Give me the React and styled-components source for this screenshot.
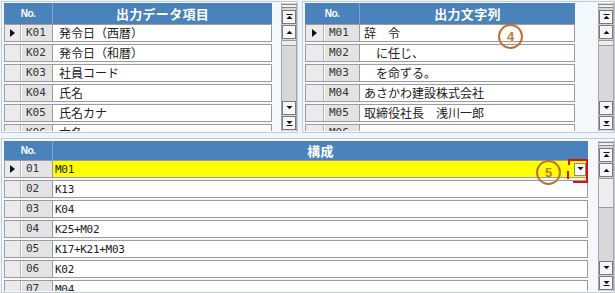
import React from "react";
import styled, { createGlobalStyle } from "styled-components";

const GlobalStyle = createGlobalStyle`
  body {
    margin: 0;
    background: #eef5fc;
    font-family: "Noto Sans CJK JP", "Liberation Sans", sans-serif;
  }
`;

const Page = styled.div`
  position: relative;
  width: 615px;
  height: 293px;
  box-sizing: border-box;
  padding: 1px 0 0 1px;
  display: grid;
  grid-template-columns: 297px 313px;
  grid-template-rows: 132px 155px;
  column-gap: 4px;
  row-gap: 5px;
`;

const Panel = styled.div`
  grid-column: ${(p) => (p.wide ? "1 / span 2" : "auto")};
  display: flex;
  box-sizing: border-box;
  border: 1px solid #c3ccd6;
  padding: ${(p) => (p.wide ? "2px" : "1px")} 0 1px 2px;
  background: #f3f8fd;
  overflow: hidden;
`;

const Grid = styled.div`
  width: ${(p) => p.w}px;
  display: flex;
  flex-direction: column;
  overflow: hidden;
  flex-shrink: 0;
`;

const HeadRow = styled.div`
  display: flex;
  flex-shrink: 0;
  height: ${(p) => p.h}px;
  background: #4a82bb;
  color: #fff;
`;

const HeadNo = styled.div`
  width: ${(p) => p.w}px;
  border-right: 1px solid #7aa5d0;
  display: flex;
  align-items: center;
  justify-content: center;
  font: bold 10px "Liberation Sans", sans-serif;
  letter-spacing: -0.6px;
`;

const HeadTitle = styled.div`
  flex: 1;
  display: flex;
  align-items: center;
  justify-content: center;
  font-size: 13px;
  font-weight: bold;
  letter-spacing: 0.3px;
`;

const Row = styled.div`
  display: flex;
  flex-shrink: 0;
  height: 18px;
  box-sizing: border-box;
  border: 1px solid #9c9c9c;
  border-right: none;
  margin-bottom: 2px;
`;

const Selector = styled.div`
  width: ${(p) => p.w || 15}px;
  background: #ebebeb;
  border-right: 1px solid #b4b4b4;
  display: flex;
  align-items: center;
  justify-content: center;
`;

const Pointer = styled.div`
  width: 0;
  height: 0;
  border-top: 4px solid transparent;
  border-bottom: 4px solid transparent;
  border-left: 5px solid #111;
`;

const NoCell = styled.div`
  width: ${(p) => p.w}px;
  background: #e3e3e3;
  border-left: 1px solid #fff;
  border-right: 1px solid #9c9c9c;
  padding-left: 4px;
  box-sizing: border-box;
  color: #333;
  font: 11px/16px "DejaVu Sans Mono", monospace;
`;

const Value = styled.div`
  flex: 1;
  display: flex;
  align-items: center;
  background: ${(p) => (p.active ? "#ffff00" : "#fff")};
  border-right: 1px solid #9c9c9c;
  padding-left: ${(p) => p.pad}px;
  color: #222;
  font-size: 12px;
  line-height: 16px;
  white-space: pre;
`;

const Code = styled.span`
  font: 11px "DejaVu Sans Mono", monospace;
  letter-spacing: -0.3px;
`;

const DropBtn = styled.div`
  margin-left: auto;
  margin-right: 1px;
  width: 12px;
  height: 13px;
  box-sizing: border-box;
  background: #fafafa;
  border: 1px solid #8c8c8c;
  display: flex;
  align-items: center;
  justify-content: center;
`;

const Scroll = styled.div`
  margin-left: auto;
  width: 16px;
  display: flex;
  flex-direction: column;
  box-sizing: border-box;
  background: #d7d7d7;
  border-left: 1px solid #a6a6a6;
  border-right: 1px solid #a6a6a6;
`;

const Cap = styled.div`
  height: 2px;
  margin-top: 1px;
  border-top: 1px solid #888;
  border-bottom: 1px solid #888;
  background: #f0f0f0;
`;

const SBtn = styled.div`
  height: 14px;
  margin-top: ${(p) => p.mt || 1}px;
  box-sizing: border-box;
  background: #f6f6f6;
  border: 1px solid #7a7a7a;
  display: flex;
  align-items: center;
  justify-content: center;
`;

const Thumb = styled.div`
  height: ${(p) => p.h}px;
  margin-top: 1px;
  background: #ededed;
  border-top: 1px solid #9a9a9a;
  border-bottom: 1px solid #9a9a9a;
`;

const Track = styled.div`
  flex: 1;
`;

const Badge = styled.div`
  position: absolute;
  left: ${(p) => p.x}px;
  top: ${(p) => p.y}px;
  width: 25px;
  height: 25px;
  box-sizing: border-box;
  border: 2.5px solid #c0702c;
  border-radius: 50%;
  display: flex;
  align-items: center;
  justify-content: center;
  color: #c8762e;
  font: bold 13px "Liberation Sans", sans-serif;
`;

const Mark = styled.svg`
  position: absolute;
  left: 564px;
  top: 157px;
`;

const Arrow = ({ kind }) => {
  const up = kind === "first" || kind === "up";
  const bar = kind === "first" || kind === "last";
  return (
    <svg width="7" height="6" viewBox="0 0 7 6">
      {up ? (
        <>
          <polygon points="0.5,5 6.5,5 3.5,1.8" fill="#111" />
          {bar && <rect x="0.5" y="0" width="6" height="1" fill="#111" />}
        </>
      ) : (
        <>
          <polygon points="0.5,1 6.5,1 3.5,4.2" fill="#111" />
          {bar && <rect x="0.5" y="5" width="6" height="1" fill="#111" />}
        </>
      )}
    </svg>
  );
};

const ScrollBar = ({ thumb }) => (
  <Scroll>
    <Cap />
    <SBtn mt={2}>
      <Arrow kind="first" />
    </SBtn>
    <SBtn>
      <Arrow kind="up" />
    </SBtn>
    <Thumb h={thumb} />
    <Track />
    <SBtn>
      <Arrow kind="down" />
    </SBtn>
    <SBtn>
      <Arrow kind="last" />
    </SBtn>
    <div style={{ height: 1 }} />
  </Scroll>
);

const dataItems = [
  ["K01", "発令日（西暦）"],
  ["K02", "発令日（和暦）"],
  ["K03", "社員コード"],
  ["K04", "氏名"],
  ["K05", "氏名カナ"],
  ["K06", "本名"],
];

const strings = [
  ["M01", "辞　令"],
  ["M02", "　に任じ、"],
  ["M03", "　を命ずる。"],
  ["M04", "あさかわ建設株式会社"],
  ["M05", "取締役社長　浅川一郎"],
  ["M06", ""],
];

const layout = [
  ["01", "M01"],
  ["02", "K13"],
  ["03", "K04"],
  ["04", "K25+M02"],
  ["05", "K17+K21+M03"],
  ["06", "K02"],
  ["07", "M04"],
];

const App = () => (
  <Page>
    <GlobalStyle />
    <Panel>
      <Grid w={268}>
        <HeadRow h={21}>
          <HeadNo w={48}>No.</HeadNo>
          <HeadTitle>出力データ項目</HeadTitle>
        </HeadRow>
        {dataItems.map(([no, text], i) => (
          <Row key={no}>
            <Selector>{i === 0 && <Pointer />}</Selector>
            <NoCell w={32}>{no}</NoCell>
            <Value pad={6}>{text}</Value>
          </Row>
        ))}
      </Grid>
      <ScrollBar thumb={4} />
    </Panel>

    <Panel>
      <Grid w={270}>
        <HeadRow h={21}>
          <HeadNo w={54}>No.</HeadNo>
          <HeadTitle>出力文字列</HeadTitle>
        </HeadRow>
        {strings.map(([no, text], i) => (
          <Row key={no}>
            <Selector w={17}>{i === 0 && <Pointer />}</Selector>
            <NoCell w={36}>{no}</NoCell>
            <Value pad={4}>{text}</Value>
          </Row>
        ))}
      </Grid>
      <ScrollBar thumb={4} />
    </Panel>

    <Panel wide>
      <Grid w={584}>
        <HeadRow h={19}>
          <HeadNo w={48}>No.</HeadNo>
          <HeadTitle>構成</HeadTitle>
        </HeadRow>
        {layout.map(([no, text], i) => (
          <Row key={no}>
            <Selector>{i === 0 && <Pointer />}</Selector>
            <NoCell w={32}>{no}</NoCell>
            <Value pad={2} active={i === 0}>
              <Code>{text}</Code>
              {i === 0 && (
                <DropBtn>
                  <Arrow kind="down" />
                </DropBtn>
              )}
            </Value>
          </Row>
        ))}
      </Grid>
      <ScrollBar thumb={28} />
    </Panel>

    <Badge x={498} y={24}>4</Badge>
    <Badge x={536} y={160}>5</Badge>
    <Mark width="28" height="30" viewBox="0 0 28 30">
      <g stroke="#e01010" strokeWidth="2" fill="none">
        <line x1="4" y1="3" x2="24" y2="3" />
        <line x1="23" y1="3" x2="23" y2="26" />
        <line x1="9" y1="25" x2="23" y2="25" />
        <line x1="5" y1="3" x2="5" y2="8" />
        <line x1="4" y1="14" x2="4" y2="22" />
      </g>
    </Mark>
  </Page>
);

export default App;
